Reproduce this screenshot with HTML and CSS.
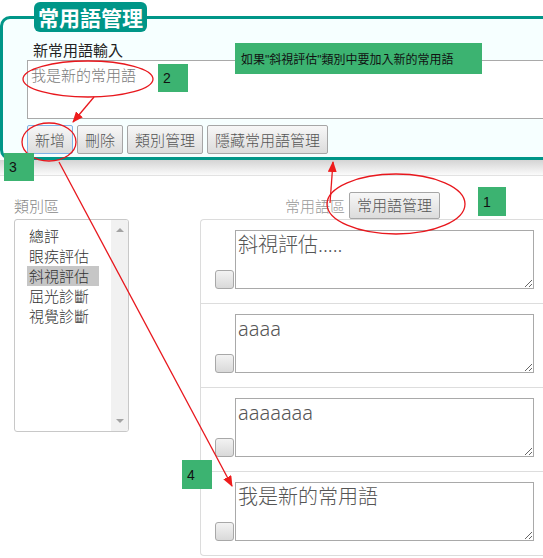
FILE: index.html
```html
<!DOCTYPE html>
<html lang="zh-Hant">
<head>
<meta charset="utf-8">
<title>常用語管理</title>
<link rel="stylesheet" href="styles.css">
</head>
<body>
<div class="page">
  <section class="panel">
    <div class="panel-title">常用語管理</div>
    <label class="field-label">新常用語輸入</label>
    <textarea class="new-input">我是新的常用語</textarea>
    <div class="btn-row">
      <button class="btn is-focus">新增</button>
      <button class="btn">刪除</button>
      <button class="btn">類別管理</button>
      <button class="btn">隱藏常用語管理</button>
    </div>
  </section>
  <div class="panel-shadow"></div>
  <main class="lower">
    <div class="col-left">
      <div class="col-head"><span class="muted">類別區</span></div>
      <div class="listbox">
        <ul class="list">
          <li>總評</li>
          <li>眼疾評估</li>
          <li class="selected">斜視評估</li>
          <li>屈光診斷</li>
          <li>視覺診斷</li>
        </ul>
        <div class="scrollbar"><span class="arr up"></span><span class="arr down"></span></div>
      </div>
    </div>
    <div class="col-right">
      <div class="col-head right-head"><span class="muted light">常用語區</span><button class="btn btn-sm">常用語管理</button></div>
      <div class="card">
        <div class="row"><span class="check"></span><textarea class="phrase">斜視評估.....</textarea></div>
        <div class="row"><span class="check"></span><textarea class="phrase">aaaa</textarea></div>
        <div class="row"><span class="check"></span><textarea class="phrase">aaaaaaa</textarea></div>
        <div class="row"><span class="check"></span><textarea class="phrase">我是新的常用語</textarea></div>
      </div>
    </div>
  </main>
</div>

<div class="notes">
  <svg class="marks" width="543" height="558" viewBox="0 0 543 558">
    <defs>
      <marker id="ah" markerWidth="11" markerHeight="9" refX="10" refY="4.5" orient="auto" markerUnits="userSpaceOnUse">
        <path d="M0,0 L11,4.5 L0,9 z" fill="#ee1c1c"/>
      </marker>
    </defs>
    <g fill="none" stroke="#e8171d" stroke-width="1.3">
      <ellipse cx="88" cy="79" rx="65" ry="18"/>
      <ellipse cx="49" cy="142" rx="27" ry="19"/>
      <ellipse cx="396" cy="204" rx="69" ry="30"/>
      <line x1="94" y1="97" x2="73" y2="122" marker-end="url(#ah)"/>
      <line x1="59" y1="162" x2="232" y2="486" marker-end="url(#ah)"/>
      <line x1="330" y1="203" x2="333" y2="162" marker-end="url(#ah)"/>
    </g>
  </svg>
  <div class="tag t2">2</div>
  <div class="tag tnote">如果"斜視評估"類別中要加入新的常用語</div>
  <div class="tag t3">3</div>
  <div class="tag t1">1</div>
  <div class="tag t4">4</div>
</div>
</body>
</html>
```

FILE: styles.css
```css
html, body {
  margin: 0;
  padding: 0;
  overflow: hidden;
  background: #fff;
}

body {
  position: relative;
  width: 543px;
  height: 558px;
  font-family: "Noto Sans", "Noto Sans CJK TC", sans-serif;
  color: #222;
}

.page {
  width: 100%;
}

/* ---------- top panel ---------- */
.panel {
  position: relative;
  margin-top: 16px;
  border: 3px solid #009688;
  border-right: none;
  border-radius: 10px 0 0 10px;
  background: #f6ffff;
  padding: 21px 0 3px 0;
}

.panel-title {
  position: absolute;
  top: -17px;
  left: 31px;
  height: 30px;
  line-height: 30px;
  padding: 0 4px;
  background: #009688;
  color: #fff;
  font-family: "Noto Sans CJK TC", sans-serif;
  font-weight: 700;
  font-size: 21px;
  border-radius: 6px;
}

.field-label {
  display: block;
  margin-left: 30px;
  font-family: "Noto Sans CJK TC", sans-serif;
  font-size: 15px;
  line-height: 20px;
  color: #222;
}

.new-input {
  display: block;
  box-sizing: border-box;
  margin: 0 0 0 24px;
  width: calc(100% - 24px);
  height: 59px;
  border: 1px solid #a9a9a9;
  border-right: none;
  padding: 4px 3px;
  font-family: "Noto Sans CJK TC", sans-serif;
  font-weight: 300;
  font-size: 15px;
  line-height: 20px;
  color: #7a7a7a;
  background: #fff;
  resize: none;
}

.btn-row {
  display: flex;
  gap: 4px;
  margin: 6px 0 0 24px;
}

.btn {
  box-sizing: border-box;
  height: 29px;
  padding: 0 7px;
  border: 1px solid #a6a6a6;
  border-radius: 2px;
  background: linear-gradient(#f7f7f7, #dcdcdc);
  font-family: "Noto Sans CJK TC", sans-serif;
  font-weight: 300;
  font-size: 15px;
  line-height: 20px;
  color: #555;
}

.btn.is-focus {
  border-color: #7fb2e5;
}

.btn-sm {
  height: 27px;
}

.panel-shadow {
  height: 15px;
  background: linear-gradient(#d4d4d4, #fbfbfb);
  border-bottom: 1px solid #e2e2e2;
}

/* ---------- lower area ---------- */
.lower {
  display: grid;
  grid-template-columns: 115px 1fr;
  column-gap: 71px;
  padding: 15px 0 0 14px;
}

.col-head {
  height: 28px;
  display: flex;
  align-items: center;
  font-family: "Noto Sans CJK TC", sans-serif;
  font-weight: 300;
  font-size: 15px;
}

.muted {
  color: #888;
}

.muted.light {
  color: #999;
}

.right-head {
  padding-left: 85px;
  gap: 4px;
}

.listbox {
  box-sizing: border-box;
  height: 213px;
  display: flex;
  border: 1px solid #c8c8c8;
  border-radius: 3px;
  overflow: hidden;
  background: #fff;
}

.list {
  flex: 1;
  list-style: none;
  margin: 0;
  padding: 6px 0 0 12px;
}

.list li {
  width: fit-content;
  padding: 0 10px 0 2px;
  font-family: "Noto Sans CJK TC", sans-serif;
  font-weight: 300;
  font-size: 15px;
  line-height: 20px;
  color: #333;
}

.list li.selected {
  background: #c6c6c6;
}

.scrollbar {
  width: 17px;
  background: #f1f1f1;
  display: flex;
  flex-direction: column;
  justify-content: space-between;
  align-items: center;
  padding: 8px 0;
  box-sizing: border-box;
}

.arr {
  width: 0;
  height: 0;
  border-left: 4px solid transparent;
  border-right: 4px solid transparent;
}

.arr.up {
  border-bottom: 4px solid #a3a3a3;
}

.arr.down {
  border-top: 4px solid #a3a3a3;
}

.card {
  border: 1px solid #dcdcdc;
  border-right: none;
  border-radius: 4px 0 0 4px;
  background: #fff;
}

.row {
  display: flex;
  align-items: flex-end;
  padding: 10px 0 14px 14px;
  border-bottom: 1px solid #dddddd;
}

.row:last-child {
  border-bottom: none;
}

.check {
  box-sizing: border-box;
  width: 19px;
  height: 19px;
  margin-right: 1px;
  border: 1px solid #a8a8a8;
  border-radius: 3px;
  background: linear-gradient(#f3f3f3, #d9d9d9);
}

.phrase {
  display: block;
  box-sizing: border-box;
  margin: 0;
  width: 299px;
  height: 59px;
  border: 1px solid #a9a9a9;
  padding: 1px 2px;
  font-family: "Noto Sans", "Noto Sans CJK TC", sans-serif;
  font-weight: 300;
  font-size: 20px;
  line-height: 26px;
  color: #555;
  background: #fff;
}

/* ---------- annotations ---------- */
.notes {
  position: absolute;
  top: 0;
  left: 0;
  width: 543px;
  height: 558px;
  pointer-events: none;
}

.marks {
  position: absolute;
  top: 0;
  left: 0;
  display: block;
}

.tag {
  position: absolute;
  box-sizing: border-box;
  display: flex;
  align-items: center;
  padding-left: 5px;
  background: #3cb371;
  color: #111;
  font-family: "Liberation Sans", sans-serif;
  font-size: 14px;
}

.t2 { left: 158px; top: 64px; width: 30px; height: 28px; }
.t3 { left: 4px; top: 153px; width: 30px; height: 28px; }
.t1 { left: 478px; top: 187px; width: 28px; height: 29px; }
.t4 { left: 182px; top: 460px; width: 30px; height: 29px; }

.tnote {
  left: 235px;
  top: 43px;
  width: 247px;
  height: 31px;
  padding-left: 6px;
  font-family: "Liberation Sans", "Noto Sans CJK TC", sans-serif;
  font-size: 12px;
  color: #111;
}
```
